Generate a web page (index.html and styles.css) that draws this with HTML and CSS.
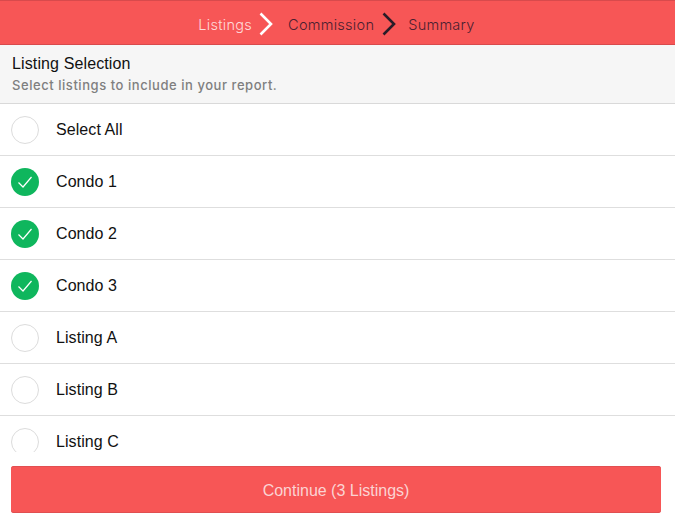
FILE: index.html
```
<!DOCTYPE html>
<html lang="en">
<head>
<meta charset="utf-8">
<title>Listing Selection</title>
<link rel="stylesheet" href="styles.css">
</head>
<body>
<div class="app">
  <nav class="steps">
    <span class="step active">Listings</span>
    <svg class="chev" width="16" height="24" viewBox="0 0 16 24"><path d="M1.5 1.5 L12 12 L1.5 22.5" fill="none" stroke="#fff" stroke-width="2.6"/></svg>
    <span class="step">Commission</span>
    <svg class="chev second" width="16" height="24" viewBox="0 0 16 24"><path d="M2.5 1.5 L13 12 L2.5 22.5" fill="none" stroke="#2a1c28" stroke-width="2.6"/></svg>
    <span class="step">Summary</span>
  </nav>
  <header class="head">
    <div class="title">Listing Selection</div>
    <div class="sub">Select listings to include in your report.</div>
  </header>
  <div class="list">
    <div class="row"><span class="radio"></span><span class="label">Select All</span></div>
    <div class="row"><span class="radio on"><svg width="28" height="28" viewBox="0 0 28 28"><path d="M7.5 14.5 L12 19 L20.5 9" fill="none" stroke="#fff" stroke-width="1.2"/></svg></span><span class="label">Condo 1</span></div>
    <div class="row"><span class="radio on"><svg width="28" height="28" viewBox="0 0 28 28"><path d="M7.5 14.5 L12 19 L20.5 9" fill="none" stroke="#fff" stroke-width="1.2"/></svg></span><span class="label">Condo 2</span></div>
    <div class="row"><span class="radio on"><svg width="28" height="28" viewBox="0 0 28 28"><path d="M7.5 14.5 L12 19 L20.5 9" fill="none" stroke="#fff" stroke-width="1.2"/></svg></span><span class="label">Condo 3</span></div>
    <div class="row"><span class="radio"></span><span class="label">Listing A</span></div>
    <div class="row"><span class="radio"></span><span class="label">Listing B</span></div>
    <div class="row"><span class="radio"></span><span class="label">Listing C</span></div>
  </div>
  <footer class="foot">
    <button class="cta">Continue (3 Listings)</button>
  </footer>
</div>
</body>
</html>
```
FILE: styles.css
```
html, body { margin: 0; padding: 0; background: #fff; }
.app { width: 675px; height: 526px; display: flex; flex-direction: column; overflow: hidden; font-family: "Liberation Sans", Arial, sans-serif; }
.steps { box-sizing: border-box; height: 45px; flex: none; background: #f75656; border-top: 1px solid #d84a4c; border-bottom: 1px solid #d84a4c; display: flex; align-items: center; justify-content: center; font-family: Inter, sans-serif; font-size: 14.5px; font-weight: 300; letter-spacing: 0.28px; color: #4a2030; gap: 7px; padding: 3px 2px 0 0; }
.step.active { color: #ffd9d9; }
.chev { flex: none; margin-right: 6px; }
.chev.second { margin-right: 4px; }
.head { box-sizing: border-box; height: 59px; flex: none; background: #f6f6f6; border-bottom: 1px solid #d9d9d9; padding: 9px 12px 0; }
.title { font-size: 16px; line-height: 20px; color: #111; letter-spacing: 0.12px; }
.sub { font-family: Inter, sans-serif; font-size: 13px; font-weight: 500; line-height: 18px; margin-top: 2px; color: #7f7f7f; letter-spacing: 0.55px; }
.list { flex: none; height: 348px; overflow: hidden; }
.row { box-sizing: border-box; height: 52px; border-bottom: 1px solid #dedede; display: flex; align-items: center; padding-left: 11px; }
.radio { box-sizing: border-box; width: 28px; height: 28px; border: 1px solid #dcdcdc; border-radius: 50%; flex: none; display: block; }
.radio.on { background: #0fb65d; border: none; }
.radio svg { display: block; }
.label { margin-left: 17px; font-size: 16px; color: #111; letter-spacing: 0.08px; }
.foot { flex: 1; background: #fff; padding: 14px 14px 0 11px; }
.cta { display: block; width: 100%; height: 47px; border: none; border-radius: 3px; background: #f75656; color: #fbd3d3; font-family: "Liberation Sans", Arial, sans-serif; font-size: 16px; padding: 2px 0 0; box-shadow: inset 0 1px 0 #e24f51, inset 0 -1px 0 #e04f51; }
```
